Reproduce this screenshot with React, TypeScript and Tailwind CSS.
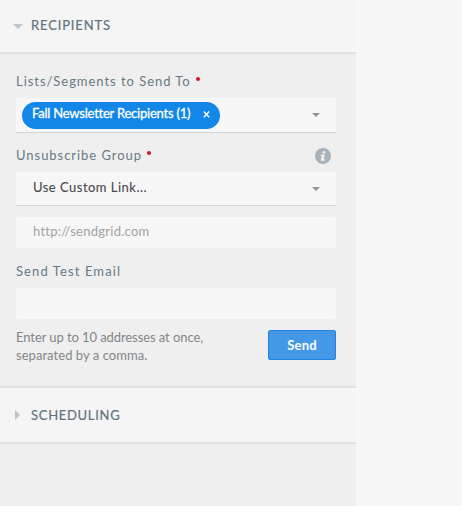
import React from "react";

function Caret({ className = "" }: { className?: string }) {
  return (
    <svg width="8" height="4" viewBox="0 0 8 4" className={className}>
      <path d="M0 0H8L4 4Z" fill="#929496" />
    </svg>
  );
}

function Label({ children, required, tracking }: { children: React.ReactNode; required?: boolean; tracking: string }) {
  return (
    <div className="flex h-[18px] items-center whitespace-nowrap text-[13px] leading-[18px] text-[#687a83]">
      <span className={`mb-[2px] ${tracking}`}>{children}</span>
      {required && <span className="mb-[6px] ml-[5px] size-[4px] rounded-full bg-[#d0122b]" />}
    </div>
  );
}

export default function App() {
  return (
    <div className="h-[506px] w-[462px] overflow-hidden bg-[#f7f7f7] font-['Lato','Liberation_Sans',sans-serif]">
      <div className="flex h-full w-[356px] flex-col bg-[#efefef]">
        <header className="flex h-[54px] shrink-0 items-center border-b-2 border-[#dfe2e2] bg-[#f5f5f5] pl-[13px]">
          <svg width="10" height="5" viewBox="0 0 10 5">
            <path d="M0 0H10L5 5Z" fill="#c0c4c5" />
          </svg>
          <h2 className="mb-[2px] ml-2 text-[13px] leading-[18px] tracking-[0.85px] text-[#61737c] [-webkit-text-stroke:0.2px_#61737c]">RECIPIENTS</h2>
        </header>

        <section className="flex h-[332px] shrink-0 flex-col pl-4 pr-5 pt-[19px]">
          <Label required tracking="tracking-[0.96px]">Lists/Segments to Send To</Label>
          <div className="mt-[7px] flex h-[35px] items-center justify-between border-b border-[#d0d5db] bg-[#f7f7f7] pl-[6px] pr-4">
            <div className="flex h-[27px] w-[198px] items-center justify-between rounded-full bg-[#1287e8] pl-[10px] pr-[10px] text-[13px] text-white">
              <span className="mb-[2px] whitespace-nowrap tracking-[-0.22px] [-webkit-text-stroke:0.3px_white]">Fall Newsletter Recipients (1)</span>
              <svg width="7" height="7" viewBox="0 0 7 7" className="mb-[2px]">
                <path d="M0.8 0.6L6.2 6.2M6.2 0.6L0.8 6.2" stroke="white" strokeWidth="1.4" />
              </svg>
            </div>
            <Caret />
          </div>

          <div className="mt-[14px] flex items-center justify-between pr-[5px]">
            <Label required tracking="tracking-[0.96px]">Unsubscribe Group</Label>
            <svg width="16" height="16" viewBox="0 0 16 16">
              <circle cx="8" cy="8" r="8" fill="#aab2b9" />
              <circle cx="9" cy="4.2" r="1.3" fill="#f5f6f6" />
              <path d="M5.8 6.5H9.6L8.5 11.3H9.9L9.5 12.7H5.7L6.9 7.8H5.4Z" fill="#f5f6f6" />
            </svg>
          </div>
          <div className="mt-[7px] flex h-[34px] items-center justify-between border-b border-[#d0d5db] bg-[#f7f7f7] pl-[17px] pr-4 text-[13px] text-[#49494b]">
            <span className="mb-px tracking-[0.48px] [-webkit-text-stroke:0.1px_#49494b]">Use Custom Link...</span>
            <Caret />
          </div>
          <div className="mt-[11px] flex h-[31px] items-center rounded-[2px] bg-[#f7f7f7] pl-[17px] text-[13px] text-[#a0a3a4]">
            <span className="mb-[2px] tracking-[0.26px]">http://sendgrid.com</span>
          </div>

          <div className="mt-[15px]"><Label tracking="tracking-[1.1px]">Send Test Email</Label></div>
          <div className="mt-[7px] h-[31px] rounded-[2px] bg-[#f7f7f7]" />
          <div className="mt-[9px] flex items-start justify-between">
            <p className="whitespace-nowrap text-[13px] leading-[18px] text-[#838688]">
              <span className="tracking-[-0.08px]">Enter up to 10 addresses at once,</span>
              <br />
              <span className="tracking-[0.05px]">separated by a comma.</span>
            </p>
            <button className="mt-[2px] flex h-[30px] w-[68px] items-center justify-center rounded-[2px] border border-[#1f85e4] bg-[#4598e6] pt-[2px] text-[13px] font-bold tracking-[0.2px] text-white">Send</button>
          </div>
        </section>

        <header className="flex h-[58px] shrink-0 items-center border-b-2 border-t-2 border-[#dfe2e2] bg-[#f5f5f5] pl-[15px]">
          <svg width="5" height="10" viewBox="0 0 5 10">
            <path d="M0 0L5 5L0 10Z" fill="#c0c4c5" />
          </svg>
          <h2 className="ml-[11px] text-[13px] leading-[18px] tracking-[0.7px] text-[#61737c] [-webkit-text-stroke:0.2px_#61737c]">SCHEDULING</h2>
        </header>
      </div>
    </div>
  );
}
